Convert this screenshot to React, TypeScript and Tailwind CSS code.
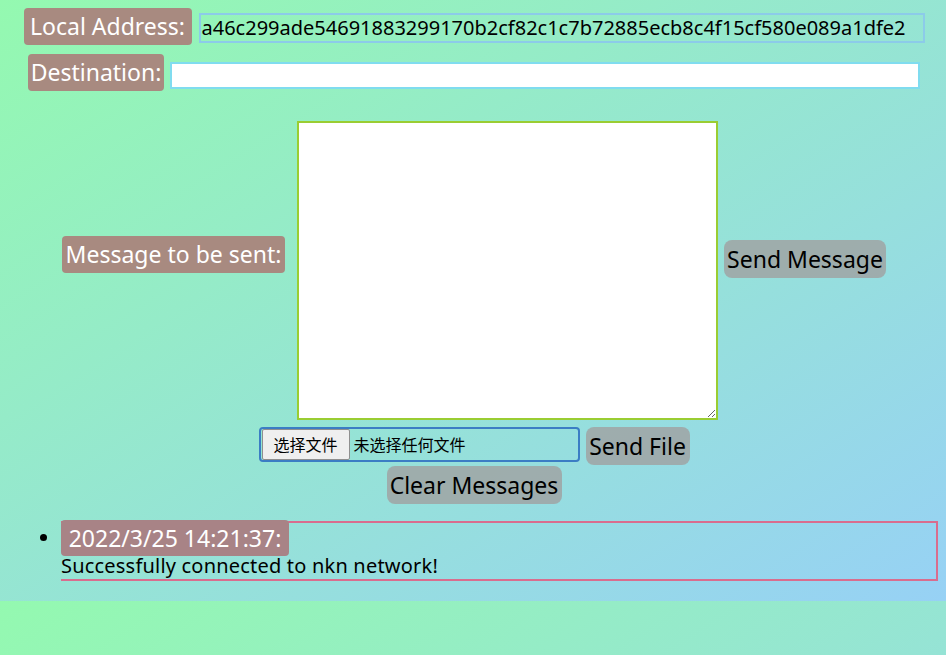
const font = "font-['Segoe_UI','Noto_Sans','Noto_Sans_CJK_SC',sans-serif]";

function Label({ text, className = "" }: { text: string; className?: string }) {
  return (
    <span className={`flex h-[37px] shrink-0 items-center justify-center whitespace-nowrap rounded-[4px] bg-[#a88a80] text-[23px] leading-none text-white ${className}`}>
      {text}
    </span>
  );
}

function GrayButton({ text, className = "" }: { text: string; className?: string }) {
  return (
    <button className={`flex h-[38px] shrink-0 items-center justify-center whitespace-nowrap rounded-[8px] bg-[rgba(160,160,160,0.8)] text-[23px] leading-none text-black ${className}`}>
      {text}
    </button>
  );
}

export default function App() {
  return (
    <div className={`min-h-[655px] bg-[linear-gradient(to_bottom_right,#94f9b0,#97d1f5)] bg-[length:100%_601px] bg-repeat-y ${font}`}>
      <div className="h-[601px] pt-2 pl-[2px]">
        <div className="flex items-start justify-center gap-[7px]">
          <Label text="Local Address:" className="w-[168px]" />
          <div className="mt-[5px] flex h-[30px] w-[726px] items-center border-2 border-[#8ccbe9] pl-[1px] text-[20px] text-black">
            a46c299ade54691883299170b2cf82c1c7b72885ecb8c4f15cf580e089a1dfe2
          </div>
        </div>

        <div className="mt-[9px] flex items-start justify-center gap-[6px]">
          <Label text="Destination:" className="w-[136px]" />
          <input className="mt-[8px] h-[27px] w-[750px] border-2 border-[#80dcef] bg-white outline-none" />
        </div>

        <div className="mt-[30px] flex items-start justify-center">
          <Label text="Message to be sent:" className="mt-[115px] mr-[12px] w-[223px]" />
          <textarea className="h-[299px] w-[421px] shrink-0 border-2 border-[#9acd32] bg-white outline-none" />
          <GrayButton text="Send Message" className="mt-[119px] ml-[6px] w-[162px]" />
        </div>

        <div className="mt-[7px] flex items-start justify-center gap-[6px]">
          <div className="flex h-[35px] w-[321px] items-center rounded-[4px] border-2 border-[#3b7dc4] px-[1px] text-[16px] text-black">
            <span className="flex h-[31px] w-[88px] items-center justify-center rounded-[2px] border border-[#8f8f8f] bg-[#efefef]">选择文件</span>
            <span className="ml-[4px]">未选择任何文件</span>
          </div>
          <GrayButton text="Send File" className="h-[37px] w-[104px]" />
        </div>

        <div className="mt-[1px] flex justify-center">
          <GrayButton text="Clear Messages" className="h-[37px] w-[175px]" />
        </div>

        <ul className="mt-[17px] list-disc pl-[59px] pr-2 text-[20px] text-black">
          <li className="h-[60px] border-y-2 border-r-2 border-[#d96d8e]">
            <span className="-mt-[3px] inline-flex h-[36px] w-[228px] items-center justify-center rounded-[4px] bg-[#a88386] align-top text-[23px] leading-none text-white">
              2022/3/25 14:21:37:
            </span>
            <div className="-mt-[1px] leading-[22px] tracking-[0.2px]">Successfully connected to nkn network!</div>
          </li>
        </ul>
      </div>
    </div>
  );
}
